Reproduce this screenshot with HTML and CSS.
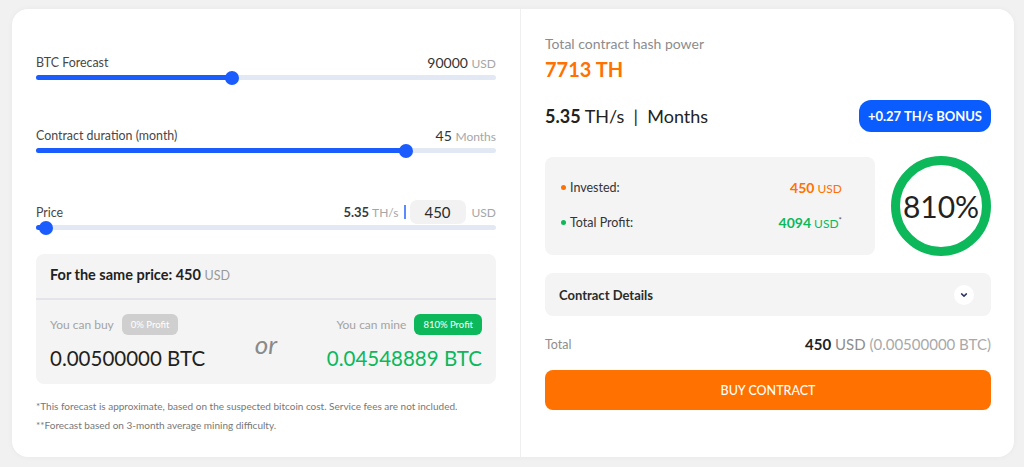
FILE: index.html
```html
<!DOCTYPE html>
<html lang="en">
<head>
  <meta charset="UTF-8">
  <title>Mining Calculator</title>
  <link rel="stylesheet" href="styles.css">
</head>
<body>

  <div class="calc">
    <section class="calc-left">

      <div class="slider">
        <div class="slider-head">
          <span class="slider-label">BTC Forecast</span>
          <span class="slider-value">90000 <small>USD</small></span>
        </div>
        <div class="track"><div class="fill" style="width:42.5%"></div><span class="thumb" style="left:42.5%"></span></div>
      </div>

      <div class="slider">
        <div class="slider-head">
          <span class="slider-label">Contract duration (month)</span>
          <span class="slider-value">45 <small>Months</small></span>
        </div>
        <div class="track"><div class="fill" style="width:80.5%"></div><span class="thumb" style="left:80.5%"></span></div>
      </div>

      <div class="slider">
        <div class="slider-head">
          <span class="slider-label">Price</span>
          <span class="slider-value price-value">
            <b>5.35</b> <small>TH/s</small><i class="bar"></i><span class="price-input">450</span><small>USD</small>
          </span>
        </div>
        <div class="track"><div class="fill" style="width:2.2%"></div><span class="thumb" style="left:2.2%"></span></div>
      </div>

      <div class="compare">
        <div class="compare-head">For the same price: 450 <small>USD</small></div>
        <div class="compare-body">
          <div class="compare-col">
            <div class="compare-title">You can buy <span class="badge grey">0% Profit</span></div>
            <div class="compare-amount">0.00500000 BTC</div>
          </div>
          <div class="or">or</div>
          <div class="compare-col right">
            <div class="compare-title">You can mine <span class="badge green">810% Profit</span></div>
            <div class="compare-amount green-text">0.04548889 BTC</div>
          </div>
        </div>
      </div>

      <p class="note">*This forecast is approximate, based on the suspected bitcoin cost. Service fees are not included.</p>
      <p class="note">**Forecast based on 3-month average mining difficulty.</p>
    </section>

    <section class="calc-right">
      <div class="hash-label">Total contract hash power</div>
      <div class="hash-value">7713 TH</div>

      <div class="speed-row">
        <div class="speed"><b>5.35</b> TH/s &nbsp;|&nbsp; Months</div>
        <span class="bonus">+0.27 TH/s BONUS</span>
      </div>

      <div class="stats-row">
        <div class="stats">
          <div class="stat"><span class="stat-name"><i class="dot orange"></i>Invested:</span><span class="stat-val orange-text"><b>450</b> USD</span></div>
          <div class="stat"><span class="stat-name"><i class="dot green"></i>Total Profit:</span><span class="stat-val green-text"><b>4094</b> USD<sup>*</sup></span></div>
        </div>
        <div class="ring">810%</div>
      </div>

      <div class="details">
        <span>Contract Details</span>
        <span class="chev">
          <svg width="10" height="10" viewBox="0 0 10 10"><path d="M2.6 3.9 L5 6.1 L7.4 3.9" fill="none" stroke="#2b3561" stroke-width="1.5" stroke-linecap="round" stroke-linejoin="round"/></svg>
        </span>
      </div>

      <div class="total">
        <span class="total-label">Total</span>
        <span class="total-val"><b>450</b> USD <span class="muted">(0.00500000 BTC)</span></span>
      </div>

      <button class="buy">BUY CONTRACT</button>
    </section>
  </div>

</body>
</html>
```

FILE: styles.css
```css
:root {
  --blue: #1b5cff;
  --track: #e2e9f4;
  --orange: #ff7100;
  --green: #0cb85a;
  --grey-bg: #f4f4f4;
}

* {
  box-sizing: border-box;
}

body {
  margin: 0;
  padding: 9px 10px 10px 12px;
  background: #f1f1f1;
  font-family: Lato, "Open Sans", sans-serif;
  color: #2b2b2b;
}

.calc {
  display: flex;
  width: 1002px;
  height: 448px;
  background: #fff;
  border-radius: 16px;
  box-shadow: 0 0 6px rgba(0, 0, 0, .04);
}

.calc-left {
  width: 510px;
  padding: 43px 24px 0 24px;
  border-right: 1px solid #efefef;
}

.calc-right {
  flex: 1;
  padding: 26px 23px 0 24px;
}

/* sliders */
.slider {
  margin-bottom: 45px;
}

.slider:nth-child(2) {
  margin-bottom: 49px;
}

.slider:nth-child(3) {
  margin-bottom: 24px;
}

.slider-head {
  display: flex;
  justify-content: space-between;
  align-items: center;
  height: 20px;
  margin-bottom: 3px;
}

.slider-label {
  font-size: 12.4px;
  color: #474747;
}

.slider-value {
  font-size: 14px;
  color: #333;
}

.slider-value small {
  font-size: 12px;
  color: #a6a6a6;
}

.price-value {
  display: flex;
  align-items: center;
  font-size: 13px;
}

.price-value b {
  color: #3a3a3a;
  margin-right: 3px;
}

.bar {
  display: inline-block;
  width: 2px;
  height: 14px;
  background: #5d8bff;
  margin: 0 4px 0 5px;
}

.price-input {
  display: inline-block;
  width: 56px;
  height: 24px;
  line-height: 24px;
  text-align: center;
  background: #f2f2f2;
  border-radius: 7px;
  font-size: 15px;
  color: #2b2b2b;
  margin-right: 6px;
}

.track {
  position: relative;
  height: 5px;
  border-radius: 3px;
  background: var(--track);
}

.fill {
  height: 100%;
  border-radius: 3px;
  background: var(--blue);
}

.thumb {
  position: absolute;
  top: 50%;
  width: 14px;
  height: 14px;
  margin: -7px 0 0 -7px;
  border-radius: 50%;
  background: var(--blue);
}

/* compare box */
.compare {
  background: var(--grey-bg);
  border-radius: 8px;
}

.compare-head {
  height: 46px;
  padding: 12px 14px 0;
  font-size: 14.5px;
  font-weight: 700;
  color: #222;
  border-bottom: 2px solid #e4e4ea;
}

.compare-head small {
  font-size: 12.5px;
  font-weight: 400;
  color: #999;
}

.compare-body {
  display: flex;
  justify-content: space-between;
  padding: 14px 14px 0;
  height: 84px;
}

.compare-col.right {
  text-align: right;
}

.compare-title {
  font-size: 12px;
  color: #a3a3a3;
  display: flex;
  align-items: center;
  gap: 8px;
}

.compare-col.right .compare-title {
  justify-content: flex-end;
}

.badge {
  font-size: 9.5px;
  color: #fff;
  padding: 5px 9px;
  border-radius: 6px;
}

.badge.grey {
  background: #cfcfcf;
}

.badge.green {
  background: var(--green);
}

.compare-amount {
  font-size: 20.5px;
  margin-top: 11px;
  color: #1f1f1f;
}

.green-text {
  color: var(--green);
}

.orange-text {
  color: var(--orange);
}

.or {
  font-size: 26px;
  font-style: italic;
  color: #8a8a8a;
  padding-top: 14px;
}

.note {
  margin: 0;
  font-size: 10px;
  color: #777;
}

.note:first-of-type {
  margin-top: 16px;
}

.note + .note {
  margin-top: 7px;
}

/* right side */
.hash-label {
  font-size: 14px;
  color: #8c8c8c;
}

.hash-value {
  font-size: 20px;
  font-weight: 700;
  color: var(--orange);
  margin-top: 5px;
}

.speed-row {
  display: flex;
  justify-content: space-between;
  align-items: center;
  margin-top: 19px;
}

.speed {
  font-size: 18px;
  color: #222;
}

.bonus {
  background: #0a5cff;
  color: #fff;
  font-size: 13px;
  font-weight: 700;
  padding: 8px 9px;
  border-radius: 12px;
}

.stats-row {
  display: flex;
  align-items: center;
  gap: 16px;
  margin-top: 24px;
}

.stats {
  width: 330px;
  height: 98px;
  background: var(--grey-bg);
  border-radius: 8px;
  padding: 22px 33px 0 16px;
  display: flex;
  flex-direction: column;
  gap: 18px;
}

.stat {
  display: flex;
  justify-content: space-between;
  font-size: 12.5px;
  color: #333;
}

.stat-name {
  display: flex;
  align-items: center;
}

.dot {
  width: 5px;
  height: 5px;
  border-radius: 50%;
  margin-right: 4px;
}

.dot.orange { background: var(--orange); }
.dot.green  { background: var(--green); }

.stat-val {
  font-size: 12px;
}

.stat-val b {
  font-size: 14px;
}

.stat-val sup {
  font-size: 8px;
  color: #555;
}

.ring {
  width: 100px;
  height: 100px;
  border: 9px solid var(--green);
  border-radius: 50%;
  display: flex;
  align-items: center;
  justify-content: center;
  font-size: 30px;
  color: #222;
}

.details {
  display: flex;
  justify-content: space-between;
  align-items: center;
  height: 43px;
  margin-top: 17px;
  padding: 0 17px 0 14px;
  background: var(--grey-bg);
  border-radius: 8px;
  font-size: 13px;
  font-weight: 700;
  color: #2b2b2b;
}

.chev {
  width: 20px;
  height: 20px;
  border-radius: 50%;
  background: #fff;
  display: flex;
  align-items: center;
  justify-content: center;
}

.total {
  display: flex;
  justify-content: space-between;
  align-items: center;
  margin-top: 19px;
  font-size: 12.5px;
}

.total-label {
  color: #8e8e8e;
}

.total-val {
  font-size: 15px;
  color: #8e8e8e;
}

.total-val b {
  color: #222;
}

.muted {
  color: #a9a9a9;
}

.buy {
  display: block;
  width: 100%;
  height: 40px;
  margin-top: 17px;
  border: none;
  border-radius: 8px;
  background: var(--orange);
  color: #fff;
  font-family: inherit;
  font-size: 12.5px;
  font-weight: 500;
  cursor: pointer;
}
```
